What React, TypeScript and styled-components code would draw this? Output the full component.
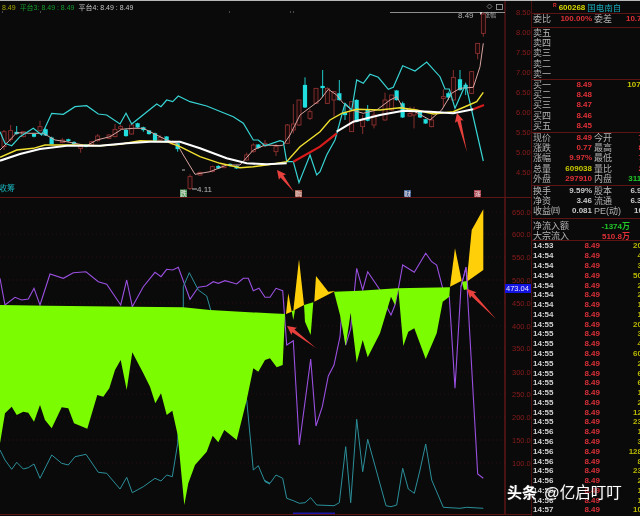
import React from "react";
import styled, { createGlobalStyle } from "styled-components";

const Global = createGlobalStyle`
  html, body { margin: 0; padding: 0; background: #0a0a0a; }
`;

const Root = styled.div`
  width: 640px;
  height: 516px;
  box-sizing: border-box;
  border-top: 1px solid #b8b8b8;
  background: #0a0a0a;
  display: flex;
  overflow: hidden;
  position: relative;
  font-family: "Liberation Sans", "Noto Sans CJK SC", sans-serif;
  filter: blur(0.35px);
`;
const ChartColumn = styled.div`
  width: 531px;
  flex: none;
  display: flex;
  flex-direction: column;
`;
const UpperPane = styled.div`
  position: relative;
  height: 197px;
  flex: none;
  box-sizing: border-box;
  border-bottom: 1px solid #5c1414;
`;
const LowerPane = styled.div`
  height: 317px;
  flex: none;
  box-sizing: border-box;
  border-bottom: 1px solid #5c1414;
`;
const ChartSvg = styled.svg`
  display: block;
  width: 531px;
  height: 100%;
`;
const Legend = styled.div`
  position: absolute;
  left: 2px;
  top: 1px;
  display: flex;
  gap: 4px;
  font-size: 7px;
  line-height: 11px;
  white-space: nowrap;
`;
const LegendItem = styled.span<{ $c: string }>`
  color: ${(p) => p.$c};
`;
const AxisText = styled.text`
  fill: #8a1c1c;
  font-size: 7.5px;
  font-family: "Liberation Sans", sans-serif;
`;
const BadgeText = styled.text`
  fill: #f0e0e0;
  font-size: 6.5px;
  text-anchor: middle;
  font-family: "Noto Sans CJK SC", sans-serif;
`;
const MarkText = styled.text<{ $c: string; $s?: number }>`
  fill: ${(p) => p.$c};
  font-size: ${(p) => p.$s ?? 8}px;
  font-family: "Liberation Sans", "Noto Sans CJK SC", sans-serif;
`;
const AxisTag = styled.text`
  fill: #e8e8ff;
  font-size: 7.5px;
  font-family: "Liberation Sans", sans-serif;
`;

const Panel = styled.div`
  width: 109px;
  flex: none;
  box-sizing: border-box;
  border-left: 1px solid #4a1010;
  overflow: hidden;
  display: flex;
  flex-direction: column;
`;
const Inner = styled.div`
  width: 122px;
  padding-left: 1px;
  display: flex;
  flex-direction: column;
`;
const Title = styled.div`
  height: 12px;
  margin-left: 20px;
  display: flex;
  align-items: center;
  gap: 2px;
  font-weight: bold;
  font-size: 8px;
  color: #d8d800;
`;
const Flag = styled.span`
  color: #e03030;
  font-size: 5px;
  line-height: 5px;
  align-self: flex-start;
  margin-top: 2px;
`;
const StockName = styled.span`
  color: #18a8b8;
  font-weight: normal;
  font-size: 8.5px;
`;
const Section = styled.div<{ $h: number; $pad?: number }>`
  height: ${(p) => p.$h}px;
  box-sizing: border-box;
  border-top: 1px solid #5c1414;
  margin-left: -2px;
  padding-left: 2px;
  padding-top: ${(p) => p.$pad ?? 0}px;
  display: flex;
  flex-direction: column;
`;
const Row = styled.div`
  height: 10.2px;
  display: grid;
  grid-template-columns: 59px 62px;
  line-height: 10px;
`;
const Cell = styled.div`
  display: flex;
  justify-content: space-between;
  align-items: center;
  white-space: nowrap;
`;
const CellRight = styled(Cell)`
  padding-left: 2px;
`;
const Label = styled.span`
  color: #b4b4b4;
  font-size: 9px;
`;
const Value = styled.span<{ $c: string }>`
  color: ${(p) => p.$c};
  font-size: 8px;
  font-weight: bold;
`;
const FlowRow = styled.div`
  width: 97px;
  height: 10px;
  display: flex;
  justify-content: space-between;
  align-items: center;
`;
const TradeList = styled.div`
  display: flex;
  flex-direction: column;
`;
const Trade = styled.div`
  height: 9.79px;
  display: grid;
  grid-template-columns: 67px 42px;
  align-items: center;
  line-height: 9px;
`;
const TradeCell = styled.div`
  display: flex;
  justify-content: space-between;
`;
const Time = styled.span`
  color: #d0d0d0;
  font-size: 8px;
  font-weight: bold;
`;
const Price = styled.span`
  color: #d83038;
  font-size: 8px;
  font-weight: bold;
`;
const Vol = styled.span`
  color: #b8b800;
  font-size: 8px;
  font-weight: bold;
  justify-self: end;
`;
const Watermark = styled.div`
  position: absolute;
  left: 507px;
  top: 482px;
  display: flex;
  align-items: center;
  gap: 7px;
  color: #fff;
  font-size: 15.5px;
  line-height: 20px;
  white-space: nowrap;
  text-shadow: 0 0 2px #333;
`;
const WatermarkBrand = styled.b`
  font-weight: 700;
  font-size: 15px;
`;

type P = number[];
const mk = (ox: number, oy: number) => (a: P) => {
  const r: string[] = [];
  for (let i = 0; i < a.length; i += 2) r.push(`${(ox + a[i] / 3).toFixed(1)},${(oy + a[i + 1] / 3).toFixed(1)}`);
  return r.join(" ");
};
const z1 = mk(0, 0);
const z2 = mk(320, 0);
const z7 = mk(0, 190);
const z8 = mk(260, 190);

const bandCyan =
  z1([0,395,15,430,35,437,60,410,100,385,125,405,155,340,190,343,225,320,260,317,295,342,320,345,360,372,378,340,395,372,470,312,483,320,500,300,518,305,535,288,570,305,620,318,700,350,730,370,760,420,775,420,795,437,840,422,850,425,860,485,880,485,897,548,930,465,950,525,960,515]) +
  " " +
  z2([20,465,45,420,75,310,95,330,110,240,130,250,150,223,175,232,205,268,220,262,248,197,285,213,320,186,360,230,375,267,388,267,405,325,437,252,490,483]);
const pink =
  z1([0,450,20,430,50,398,90,400,130,400,165,420,200,425,225,430,260,437,290,420,330,410,365,388,400,385,430,385,470,405,500,420,530,430,550,465,585,523,630,515,680,495,720,495,760,450,795,435,840,437,850,435,870,405,900,345,960,300]) +
  " " +
  z2([25,268,50,285,70,310,95,330,130,340,170,330,210,300,230,290,250,325,285,335,330,360,365,330,395,280,420,265,460,262,480,200,490,130]);
const yellow =
  z1([0,472,50,450,100,445,135,435,220,435,300,437,360,433,420,422,500,425,540,440,600,470,660,490,720,503,760,500,820,492,860,485,900,440,960,395]) +
  " " +
  z2([30,360,65,340,110,328,180,330,240,323,290,330,340,342,400,335,440,318,470,305,490,277]);
const white =
  z1([0,482,60,462,120,447,200,437,300,437,380,430,450,425,540,425,600,445,680,475,740,490,800,493,860,490]);
const white2 = z2([50,395,100,365,180,345,250,332,330,335,400,340,460,328]);
const redLine = z1([880,485,960,440]) + " " + z2([50,400]);
const redLine2 = z2([460,328,492,315]);

const redC1 = [[12,395,440,390,450],[32,392,418,375,425],[70,395,410,395,412],[120,380,392,362,395],[187,420,428,415,430],[242,438,445,436,458],[275,425,435,425,436],[293,408,422,402,425],[327,405,415,402,417],[345,388,410,372,412],[362,380,386,375,390],[395,375,402,370,404],[480,412,420,405,422],[518,425,432,422,435],[570,530,565,523,570],[600,517,525,515,527],[637,500,515,497,517],[672,495,503,492,505],[740,465,480,458,482],[760,435,455,430,458],[795,430,438,420,440],[828,440,455,432,468],[862,375,430,372,432],[880,372,390,312,400],[897,300,375,300,378],[930,335,355,328,360],[948,265,310,265,312]];
const redC2 = [[22,265,310,262,312],[42,275,300,273,350],[95,305,395,305,396],[128,360,380,345,402],[162,345,375,330,385],[195,300,360,278,362],[215,285,330,285,332],[270,340,348,320,350],[282,330,345,320,385],[335,360,380,345,382],[370,290,295,268,320],[400,232,300,210,302],[455,215,280,213,282],[473,130,160,130,178],[490,42,100,37,110]];
const cyanC1 = [[50,396,402,378,404],[102,402,410,400,412],[137,388,406,385,408],[155,413,432,410,434],[205,418,423,416,425],[222,426,432,424,434],[258,434,440,433,442],[378,390,408,385,410],[413,370,382,368,384],[430,382,390,380,395],[447,392,402,390,404],[465,400,422,398,424],[500,410,426,408,428],[533,430,447,428,455],[655,498,505,496,507],[690,492,498,490,500],[710,498,505,496,507],[775,434,444,432,446],[915,255,322,232,324]];
const cyanC2 = [[8,258,264,210,292],[58,280,300,240,302],[75,338,345,310,360],[110,300,365,298,367],[143,330,362,315,364],[230,272,300,270,302],[248,310,352,305,354],[300,335,352,333,354],[317,358,370,356,372],[385,280,292,275,300],[420,238,270,210,272],[437,255,265,252,285]];

const Candle = ({ ox, d, up }: { ox: number; d: number[]; up: boolean }) => {
  const x = ox + d[0] / 3;
  const [bt, bb, wt, wb] = [d[1] / 3, d[2] / 3, d[3] / 3, d[4] / 3];
  const c = up ? "#973434" : "#22dede";
  return (
    <g>
      <line x1={x} x2={x} y1={wt} y2={wb} stroke={c} strokeWidth="0.9" />
      <rect x={x - 2} y={bt} width="4" height={Math.max(bb - bt, 1.5)} fill={up ? "#1a0a0a" : c} stroke={c} strokeWidth={up ? 0.8 : 0.2} />
    </g>
  );
};

const Arrow = ({ tip, tail }: { tip: [number, number]; tail: [number, number] }) => {
  const dx = tail[0] - tip[0];
  const dy = tail[1] - tip[1];
  const l = Math.hypot(dx, dy);
  const ux = dx / l;
  const uy = dy / l;
  const nx = -uy;
  const ny = ux;
  const at = (a: number, s: number) => `${tip[0] + ux * a + nx * s},${tip[1] + uy * a + ny * s}`;
  return <polygon fill="#e8403c" points={[at(0, 0), at(9, 4.5), at(8, 1.8), tail.join(","), at(8, -1.8), at(9, -4.5)].join(" ")} />;
};

const Badge = ({ x, y, c, t }: { x: number; y: number; c: string; t: string }) => (
  <g>
    <rect x={x} y={y} width="7" height="8" fill={c} />
    <BadgeText x={x + 3.5} y={y + 6.5}>{t}</BadgeText>
  </g>
);

const upperTicks = ["8.50","8.00","7.50","7.00","6.50","6.00","5.50","5.00","4.50"];
const lowerTicks = ["650.0","600.0","550.0","500.0","450.0","400.0","350.0","300.0","250.0","200.0","150.0","100.0"];
const lowerYs = [212,234,257,280,303,326,348,372,394,417,440,463];

const UpperChart = () => (
  <ChartSvg viewBox="0 1 531 196" preserveAspectRatio="none">
    <line x1="505" x2="505" y1="1" y2="197" stroke="#701818" />
    <line x1="390" x2="505" y1="12.5" y2="12.5" stroke="#b0b0b0" strokeWidth="0.8" />
    {[2, 40, 229, 290, 293].map((x) => <rect key={x} x={x} y="11.5" width="1" height="1" fill="#888" />)}
    <path d="M489.5 4l2.5 2.5-2.5 2.5-2.5-2.5z" fill="none" stroke="#888" strokeWidth="0.8" />
    <rect x="496.5" y="4.5" width="6" height="5" fill="none" stroke="#aaa" strokeWidth="0.8" />
    <MarkText $c="#b0b0b0" x="458" y="18">8.49</MarkText>
    <rect x="480" y="12" width="2" height="2.5" fill="#ccc" />
    <MarkText $c="#a8a8a8" $s={6} x="484" y="17">涨幅</MarkText>
    {upperTicks.map((t, i) => <AxisText key={t} x="516" y={15 + i * 20}>{t}</AxisText>)}
    {redC1.map((d, i) => <Candle key={"a" + i} ox={0} d={d} up />)}
    {redC2.map((d, i) => <Candle key={"b" + i} ox={320} d={d} up />)}
    {cyanC1.map((d, i) => <Candle key={"c" + i} ox={0} d={d} up={false} />)}
    {cyanC2.map((d, i) => <Candle key={"d" + i} ox={320} d={d} up={false} />)}
    <polyline points={pink} fill="none" stroke="#d8a4a0" strokeWidth="1" />
    <polyline points={bandCyan} fill="none" stroke="#38d4d4" strokeWidth="1.2" />
    <polyline points={redLine} fill="none" stroke="#d81c1c" strokeWidth="2.2" />
    <polyline points={redLine2} fill="none" stroke="#d81c1c" strokeWidth="2" />
    <polyline points={yellow} fill="none" stroke="#f0e030" strokeWidth="1.4" />
    <polyline points={white} fill="none" stroke="#ffffff" strokeWidth="2.1" />
    <polyline points={white2} fill="none" stroke="#ffffff" strokeWidth="2.1" />
    <line x1="182" x2="185" y1="170" y2="170" stroke="#aaa" />
    <line x1="192" x2="197" y1="189" y2="189" stroke="#bbb" />
    <MarkText $c="#b8b8b8" x="197" y="192">4.11</MarkText>
    <MarkText $c="#19b5bd" x="-1" y="191">收筹</MarkText>
    <Badge x={180} y={189.5} c="#4f9f60" t="跌" />
    <Badge x={295} y={190} c="#a86050" t="购" />
    <Badge x={404} y={190} c="#47689a" t="财" />
    <Badge x={474} y={190} c="#a84450" t="涨" />
    <Arrow tip={[277, 170]} tail={[294, 192]} />
    <Arrow tip={[457, 113]} tail={[467, 152]} />
  </ChartSvg>
);

const LowerChart = () => (
  <ChartSvg viewBox="0 198 531 316" preserveAspectRatio="none">
    {lowerYs.map((y) => (
      <line key={y} x1="0" x2="505" y1={y} y2={y} stroke="#3a1212" strokeDasharray="1 3" strokeWidth="0.7" />
    ))}
    <line x1="505" x2="505" y1="198" y2="514" stroke="#8a1c1c" />
    {lowerTicks.map((t, i) => <AxisText key={t} x="512" y={lowerYs[i] + 3}>{t}</AxisText>)}
    <polyline
      fill="none" stroke="#9a50e0" strokeWidth="1.1"
      points={
        z7([0,265,15,345,45,322,65,330,85,327,102,295,120,345,150,252,190,265,220,248,258,245,295,275,320,283,362,345,380,270,397,350,430,290,465,247,483,260,500,238,518,240,535,232,570,328,595,292,620,288,640,275,655,280,675,272,710,282,730,265,745,265,760,302,777,295,795,322,810,322]) +
        " " +
        z8([15,322,30,322,48,295,68,302,80,465,100,452,118,765,152,507,168,708,187,650,205,558,222,525,240,440,245,370,257,465,272,415,290,235,308,300,323,245,360,300,385,360,393,375,405,345,415,297,428,225,463,247,497,190,515,215,530,225,548,295,568,320,585,595,603,290,618,232,653,852,670,865])
      }
    />
    <polyline
      fill="none" stroke="#2b8f9a" strokeWidth="1"
      points={
        z7([0,780,15,810,35,838,50,817,70,837,85,833,102,822,120,865,155,795,185,820,205,825,225,800,258,793,295,847,320,850,360,897,380,862,397,908,430,890,465,865,483,873,500,855,517,860,533,760,550,350,550,290,568,248,595,300,620,318,632,360,740,630,760,840,775,827,795,875,810,882]) +
        " " +
        z8([15,872,30,880,48,855,68,865,80,925,100,932,118,940,135,938,152,923,170,945,222,947,238,938,257,770,272,938,290,688,308,845,323,748,378,947,393,950,410,945,428,835,445,897,463,910,480,840,497,762,515,870,550,952,600,955,620,952,670,955])
      }
    />
    <polygon
      fill="#7cfc00"
      points={
        z7([0,345,145,347,400,350,550,352,630,360,810,370]) + " " + z8([78,372,75,372,68,525,50,532,30,505]) + " " +
        z7([810,505,795,510,775,545,760,535,740,630,710,750,673,720,655,757,638,737,620,785,585,825,565,880,553,945,533,735,517,662,500,675,483,610,466,640,450,590,430,550,397,487,380,600,362,510,345,540,328,595,310,620,292,615,262,716,222,700,205,655,185,652,155,715,135,690,120,645,102,695,85,668,70,665,50,675,35,650,15,670,0,760])
      }
    />
    <polygon fill="#7cfc00" points={z8([95,363,100,390,105,360])} />
    <polygon fill="#7cfc00" points={z8([132,345,135,395,152,435,160,337])} />
    <polygon fill="#7cfc00" points={z8([222,305,240,375,257,468,272,368,290,518,308,450,323,502,360,430,393,320,405,345,415,297,430,468,445,425,463,415,497,507,530,430,548,335,568,320,570,292,410,295,300,302])} />
    <polygon fill="#7cfc00" points={z8([605,275,612,300,622,298,622,273])} />
    <polygon fill="#ffcf0a" points={z8([78,372,85,310,95,365])} />
    <polygon fill="#ffcf0a" points={z8([100,362,117,208,132,345])} />
    <polygon fill="#ffcf0a" points={z8([163,335,168,258,205,305,225,303])} />
    <polygon fill="#ffcf0a" points={z8([570,290,585,175,605,272])} />
    <polygon fill="#ffcf0a" points={z8([620,275,635,120,670,58,670,240])} />
    <polyline fill="none" stroke="#9a50e0" strokeWidth="1" points={z8([603,290,618,232,624,300])} />
    <rect x="505" y="284" width="26" height="9" fill="#1414e0" />
    <AxisTag x="506" y="291">473.04</AxisTag>
    <rect x="293" y="512.5" width="42" height="1.5" fill="#1a1aa8" />
    <Arrow tip={[287, 326]} tail={[316, 348]} />
    <Arrow tip={[467, 289]} tail={[496, 319]} />
  </ChartSvg>
);

const RED = "#e03038";
const YEL = "#c8c800";
const GRY = "#c8c8c8";
const GRN = "#20c828";

const quotes = [
  { a: "现价", v: "8.49", c: RED, b: "今开", w: "7.73", d: RED },
  { a: "涨跌", v: "0.77", c: RED, b: "最高", w: "8.49", d: RED },
  { a: "涨幅", v: "9.97%", c: RED, b: "最低", w: "7.65", d: RED },
  { a: "总量", v: "609038", c: YEL, b: "量比", w: "2.40", d: RED },
  { a: "外盘", v: "297910", c: RED, b: "内盘", w: "311128", d: GRN },
];
const funds = [
  { a: "换手", v: "9.59%", b: "股本", w: "6.93亿" },
  { a: "净资", v: "3.46", b: "流通", w: "6.35亿" },
  { a: "收益㈣", v: "0.081", b: "PE(动)", w: "10.51" },
];
const sells = ["卖五", "卖四", "卖三", "卖二", "卖一"];
const buys = [["买一","8.49","107523"],["买二","8.48",""],["买三","8.47",""],["买四","8.46",""],["买五","8.45",""]];
const trades: [string, string][] = [
  ["14:53","20"],["14:54","4"],["14:54","3"],["14:54","50"],["14:54","2"],["14:54","2"],["14:54","1"],["14:54","1"],
  ["14:55","20"],["14:55","3"],["14:55","4"],["14:55","60"],["14:55","2"],["14:55","6"],["14:55","6"],["14:55","1"],["14:55","2"],["14:55","12"],["14:55","23"],
  ["14:56","1"],["14:56","3"],["14:56","128"],["14:56","8"],["14:56","23"],["14:56","2"],["14:56","1"],["14:56","1"],["14:57","10"],
];

const SidePanel = () => (
  <Panel>
    <Inner>
      <Title><Flag>R</Flag>600268<StockName>国电南自</StockName></Title>
      <Section $h={14}>
        <Row>
          <Cell><Label>委比</Label><Value $c={RED}>100.00%</Value></Cell>
          <CellRight><Label>委差</Label><Value $c={RED}>10.75万</Value></CellRight>
        </Row>
      </Section>
      <Section $h={52}>
        {sells.map((s) => <Row key={s}><Cell><Label>{s}</Label></Cell></Row>)}
      </Section>
      <Section $h={53}>
        {buys.map(([l, p, v]) => (
          <Row key={l}>
            <Cell><Label>{l}</Label><Value $c={RED}>{p}</Value></Cell>
            <CellRight><span /><Value $c={YEL}>{v}</Value></CellRight>
          </Row>
        ))}
      </Section>
      <Section $h={53}>
        {quotes.map((q) => (
          <Row key={q.a}>
            <Cell><Label>{q.a}</Label><Value $c={q.c}>{q.v}</Value></Cell>
            <CellRight><Label>{q.b}</Label><Value $c={q.d}>{q.w}</Value></CellRight>
          </Row>
        ))}
      </Section>
      <Section $h={33}>
        {funds.map((q) => (
          <Row key={q.a}>
            <Cell><Label>{q.a}</Label><Value $c={GRY}>{q.v}</Value></Cell>
            <CellRight><Label>{q.b}</Label><Value $c={GRY}>{q.w}</Value></CellRight>
          </Row>
        ))}
      </Section>
      <Section $h={22} $pad={1}>
        <FlowRow><Label>净流入额</Label><Value $c={GRN}>-1374万</Value></FlowRow>
        <FlowRow><Label>大宗流入</Label><Value $c={RED}>510.8万</Value></FlowRow>
      </Section>
      <Section $h={276}>
        <TradeList>
          {trades.map(([t, v], i) => (
            <Trade key={i}>
              <TradeCell><Time>{t}</Time><Price>8.49</Price></TradeCell>
              <Vol>{v}</Vol>
            </Trade>
          ))}
        </TradeList>
      </Section>
    </Inner>
  </Panel>
);

export default function App() {
  return (
    <Root>
      <Global />
      <ChartColumn>
        <UpperPane>
          <Legend>
            <LegendItem $c="#a8a800">8.49</LegendItem>
            <LegendItem $c="#169c2c">平台3: 8.49 : 8.49</LegendItem>
            <LegendItem $c="#c4c4c4">平台4: 8.49 : 8.49</LegendItem>
          </Legend>
          <UpperChart />
        </UpperPane>
        <LowerPane>
          <LowerChart />
        </LowerPane>
      </ChartColumn>
      <SidePanel />
      <Watermark>
        <WatermarkBrand>头条</WatermarkBrand>
        <span>@亿启叮叮</span>
      </Watermark>
    </Root>
  );
}
